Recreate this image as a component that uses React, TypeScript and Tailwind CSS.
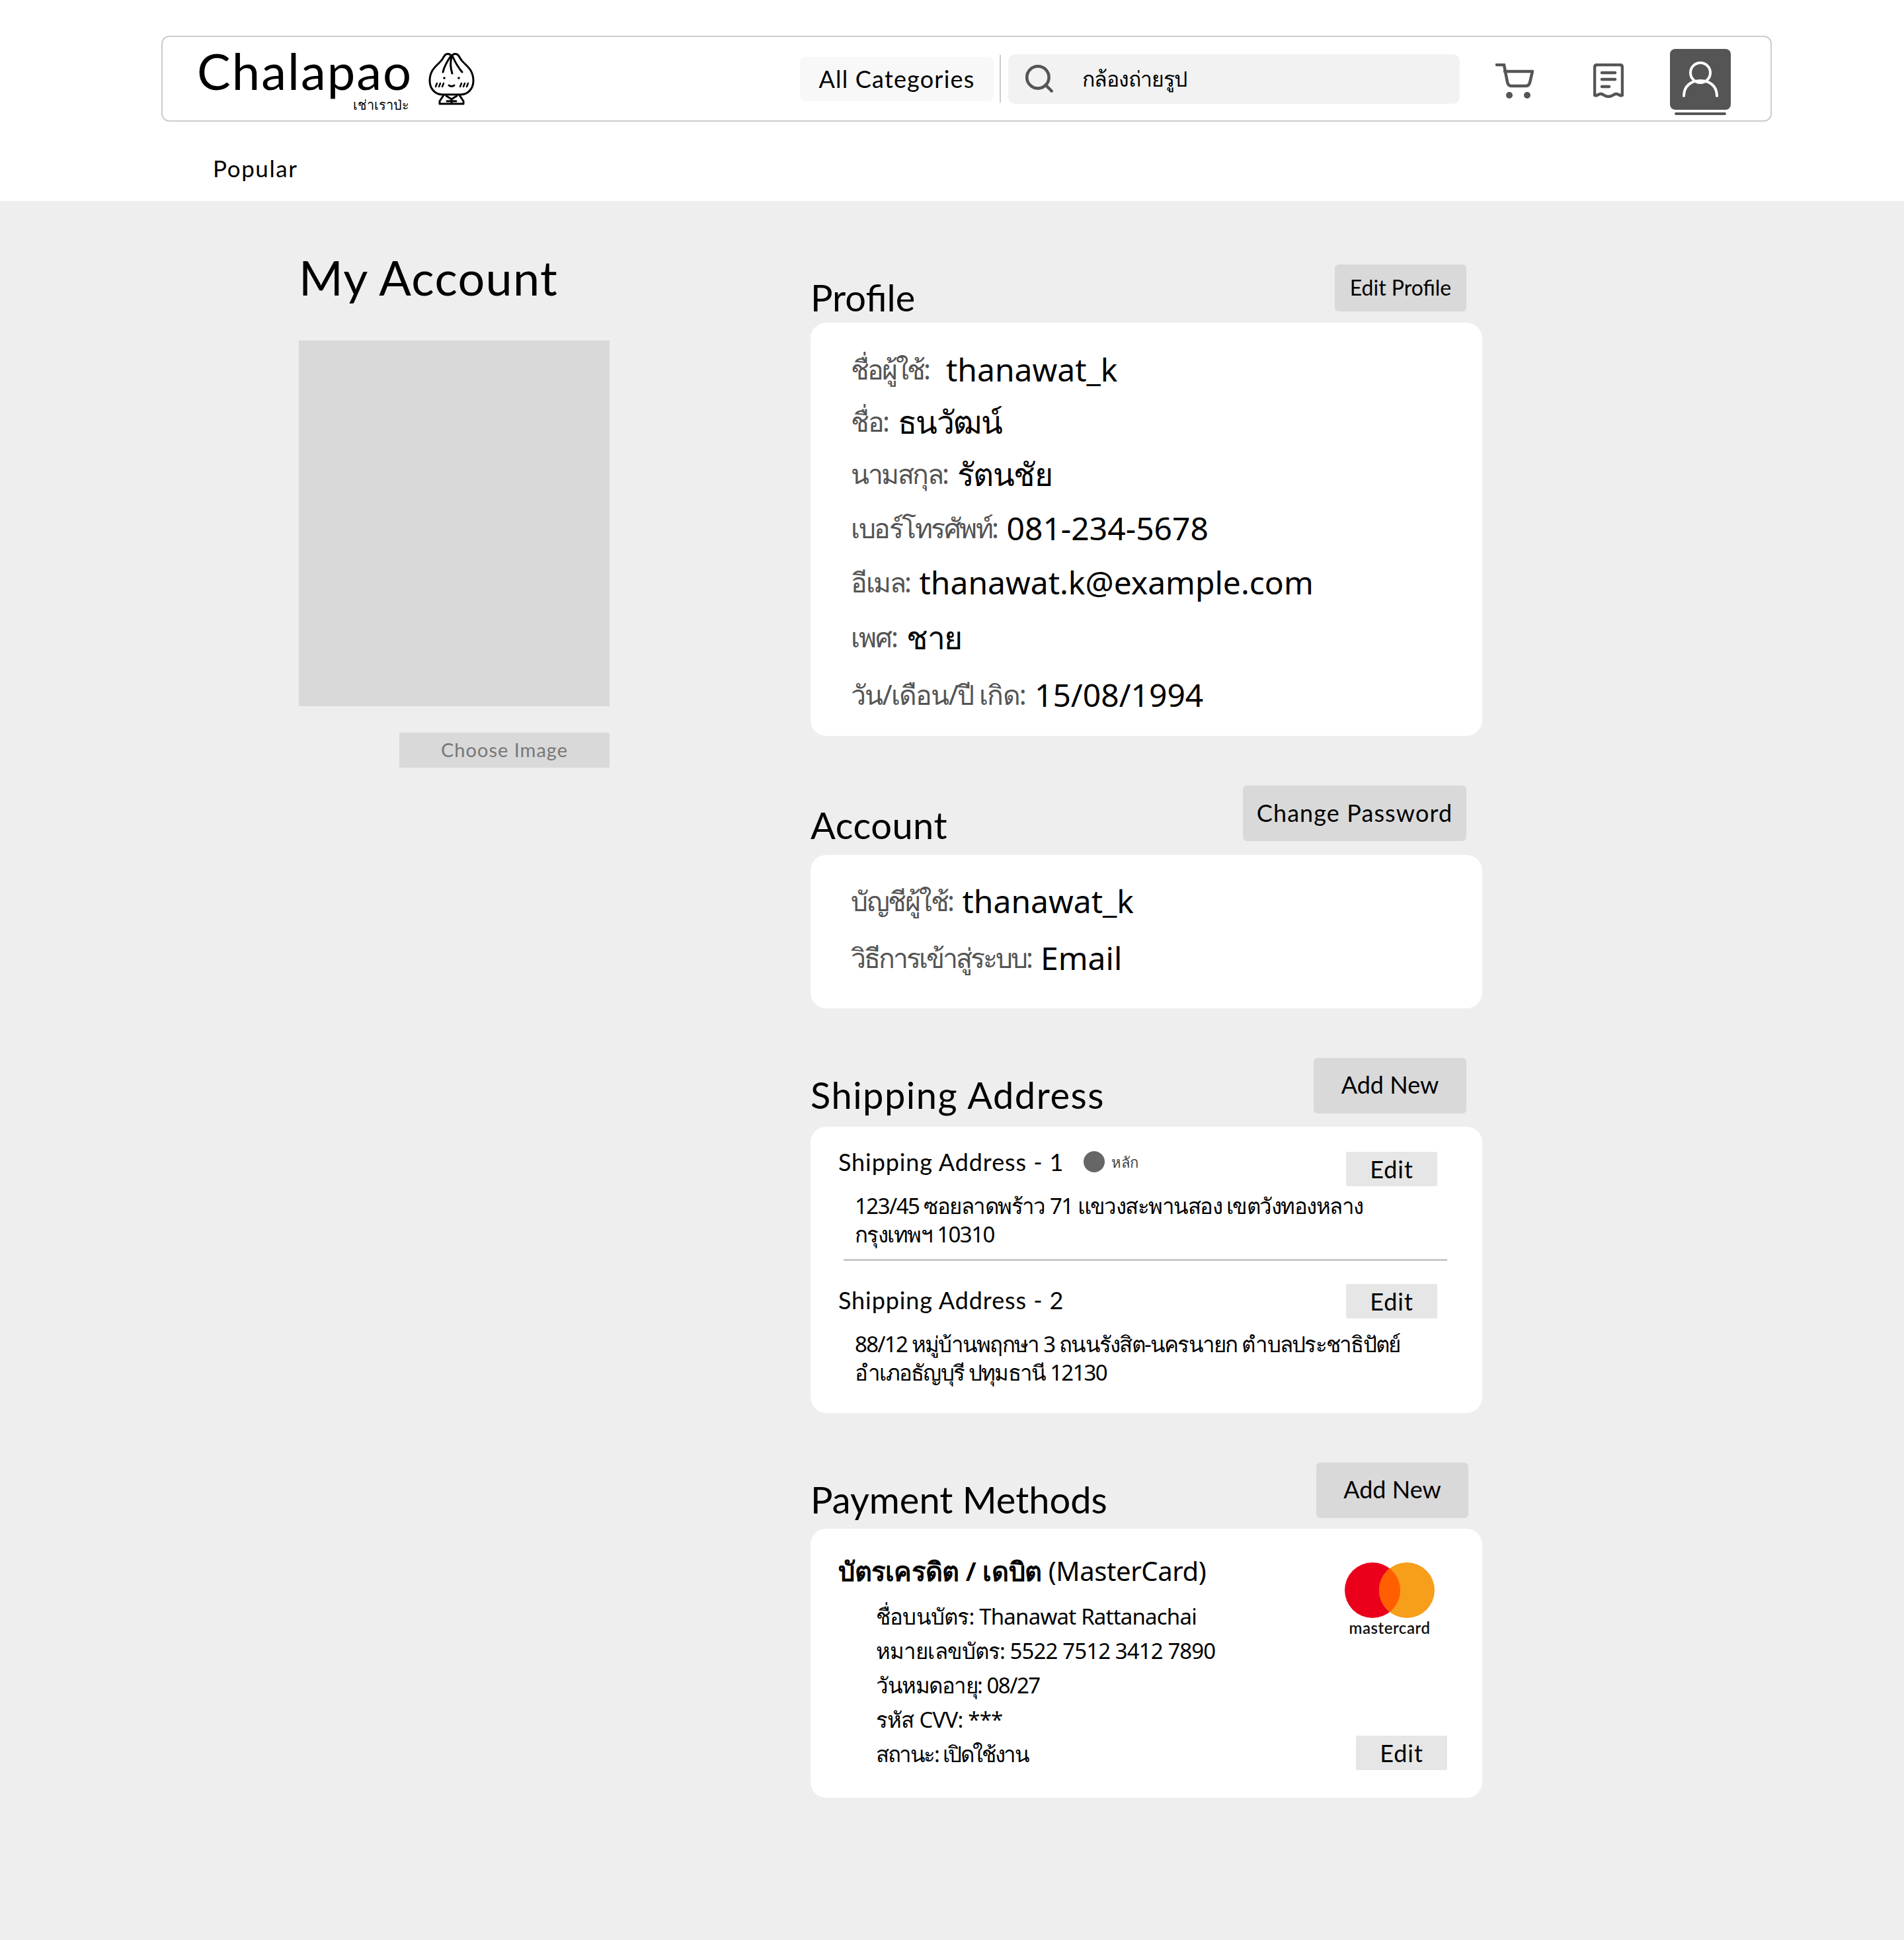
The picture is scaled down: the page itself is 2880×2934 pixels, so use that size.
import { Search } from "lucide-react";

const profileRows = [
  { label: "ชื่อผู้ใช้:", value: "thanawat_k", cls: "mt-0", labelCls: "tracking-[-3px]", gap: "ml-[26px]" },
  { label: "ชื่อ:", value: "ธนวัฒน์", cls: "mt-[9px]", labelCls: "tracking-[-2.5px]", gap: "ml-[14px] tracking-[-1.5px]" },
  { label: "นามสกุล:", value: "รัตนชัย", cls: "mt-[9px]", labelCls: "tracking-[-2.5px]", gap: "ml-[14px] tracking-[-1.5px]" },
  { label: "เบอร์โทรศัพท์:", value: "081-234-5678", cls: "mt-[12px]", labelCls: "tracking-[-2.5px]", gap: "ml-[14px]" },
  { label: "อีเมล:", value: "thanawat.k@example.com", cls: "mt-[12px]", labelCls: "tracking-[-2.5px]", gap: "ml-[14px]" },
  { label: "เพศ:", value: "ชาย", cls: "mt-[13px]", labelCls: "tracking-[-2px]", gap: "ml-[14px] tracking-[-1.5px]" },
  { label: "วัน/เดือน/ปี เกิด:", value: "15/08/1994", cls: "mt-[17px]", labelCls: "tracking-[-1.8px]", gap: "ml-[14px]" },
];

const accountRows = [
  { label: "บัญชีผู้ใช้:", value: "thanawat_k", cls: "mt-0", labelCls: "tracking-[-2.5px]" },
  { label: "วิธีการเข้าสู่ระบบ:", value: "Email", cls: "mt-[16px]", labelCls: "tracking-[-3px]" },
];

const cardRows = [
  { text: "ชื่อบนบัตร: Thanawat Rattanachai", cls: "tracking-[-0.8px]" },
  { text: "หมายเลขบัตร: 5522 7512 3412 7890", cls: "tracking-[-0.9px]" },
  { text: "วันหมดอายุ: 08/27", cls: "tracking-[-1.5px]" },
  { text: "รหัส CVV: ***", cls: "tracking-[-0.8px]" },
  { text: "สถานะ: เปิดใช้งาน", cls: "tracking-[-2.4px]" },
];

function BaoLogo() {
  return (
    <svg viewBox="0 0 70 80" className="h-[80px] w-[70px]" fill="none" stroke="#000" strokeWidth="3" strokeLinecap="round" strokeLinejoin="round">
      <path d="M27 3c3-1 6 0 8 3 2-3 5-4 8-3 3 1 4 5 7 9 5 7 18 13 18 31 0 13-9 21-19 21H21C11 64 2 56 2 43c0-18 13-24 18-31 3-4 4-8 7-9z" />
      <path d="M33 7c-4 6-9 14-11 23M35 7c-2 8-2 16 1 25M37 7c3 7 9 17 14 23" />
      <path d="M13 47l-2 5M18 47l-2 5M23 47l-2 5M50 47l-2 5M55 47l-2 5M60 47l-2 5" strokeWidth="2.500" />
      <path d="M31 50c2 2 6 2 8 0" />
      <circle cx="24" cy="39" r="1.800" fill="#000" stroke="none" />
      <circle cx="46" cy="39" r="1.800" fill="#000" stroke="none" />
      <path d="M23 65l-6 9v4h36v-4l-6-9M27 66l8 5 8-5M35 71v7M28 74h14" />
    </svg>
  );
}

function CartIcon() {
  return (
    <svg viewBox="0 0 58 54" className="h-[54px] w-[58px]" fill="none" stroke="#555" strokeWidth="4.500" strokeLinecap="round" strokeLinejoin="round">
      <path d="M2 2h11l5 26c.600 3 2.500 6 6 6h22c3 0 5-2 6-5l4-17H14" />
      <circle cx="21" cy="48" r="5" fill="#555" stroke="none" />
      <circle cx="48" cy="48" r="5" fill="#555" stroke="none" />
    </svg>
  );
}

function ReceiptIcon() {
  return (
    <svg viewBox="0 0 46 52" className="h-[52px] w-[46px]" fill="none" stroke="#555" strokeWidth="4.500" strokeLinecap="round" strokeLinejoin="round">
      <path d="M2 6c0-2.500 1.500-4 4-4h34c2.500 0 4 1.500 4 4v42c-4 2-6-3-10-2s-6 4-11 4-7-3-11-4-6 4-10 2z" />
      <path d="M13 14h20M13 24h20M13 35h11" />
    </svg>
  );
}

function UserIcon() {
  return (
    <svg viewBox="0 0 54 54" className="h-[54px] w-[54px]" fill="none" stroke="#fff" strokeWidth="4" strokeLinecap="round">
      <circle cx="27" cy="17" r="15" />
      <path d="M2 52c0-15 11-23 25-23s25 8 25 23" />
    </svg>
  );
}

function MastercardLogo() {
  return (
    <div className="flex w-[136px] flex-col items-center">
      <svg viewBox="0 0 136 84" className="h-[84px] w-[136px]">
        <circle cx="42" cy="42" r="42" fill="#eb001b" />
        <circle cx="94" cy="42" r="42" fill="#f79e1b" />
        <path d="M68 9a42 42 0 0 1 0 66 42 42 0 0 1 0-66z" fill="#ff5f00" />
      </svg>
      <span className="mt-[2px] text-[24px] leading-[26px] font-semibold tracking-[0.5px] text-[#111] [font-family:Lato,sans-serif]">mastercard</span>
    </div>
  );
}

function SectionHeader({ title, button, btnCls, titleCls }: { title: string; button: string; btnCls: string; titleCls: string }) {
  return (
    <div className="flex items-start justify-between">
      <h2 className={`text-[56px] leading-[60px] font-normal text-black ${titleCls}`}>{title}</h2>
      <button className={`flex items-center justify-center rounded-[6px] bg-[#d9d9d9] text-black ${btnCls}`}>{button}</button>
    </div>
  );
}

function EditButton({ cls }: { cls: string }) {
  return (
    <button className={`flex h-[52px] w-[138px] shrink-0 items-center justify-center rounded-[2px] bg-[#e6e6e6] text-[36px] tracking-[1px] text-black ${cls}`}>Edit</button>
  );
}

export default function App() {
  return (
    <div className="flex min-h-[2934px] flex-col bg-[#eeeeee] [font-family:Lato,'Noto_Sans',sans-serif]">
      <header className="h-[304px] bg-white pt-[54px] pr-[200px] pl-[244px]">
        <nav className="flex h-[130px] items-center rounded-[12px] border-2 border-[#cccccc] pl-[52px]">
          <div className="flex items-center">
            <div className="flex w-[336px] flex-col pt-[6px]">
              <span className="text-[76px] leading-[70px] tracking-[2px] text-black">Chalapao</span>
              <span className="mt-[4px] ml-[236px] text-[20px] leading-[26px] text-black [font-family:'Noto_Sans',sans-serif]">เช่าเราป่ะ</span>
            </div>
            <div className="ml-[14px]">
              <BaoLogo />
            </div>
          </div>
          <div className="ml-[492px] flex h-[67px] w-[293px] items-center justify-center rounded-[8px] bg-[#f8f8f8] text-[36px] tracking-[1.2px] text-black">All Categories</div>
          <div className="mr-[11px] ml-[9px] h-[72px] w-[2px] bg-[#cccccc]" />
          <div className="flex h-[75px] w-[683px] items-center rounded-[10px] bg-[#f2f2f2] pl-[22px]">
            <Search className="h-[50px] w-[50px] text-[#555555]" strokeWidth={2.200} />
            <span className="ml-[40px] text-[32px] font-medium tracking-[-1px] text-black [font-family:'Noto_Sans',sans-serif]">กล้องถ่ายรูป</span>
          </div>
          <div className="mt-[8px] ml-[54px]">
            <CartIcon />
          </div>
          <div className="mt-[6px] ml-[90px]">
            <ReceiptIcon />
          </div>
          <div className="ml-[70px] flex flex-col items-center pt-[10px]">
            <div className="flex h-[92px] w-[92px] items-center justify-center rounded-[8px] bg-[#555555]">
              <UserIcon />
            </div>
            <div className="mt-[4px] h-[4px] w-[78px] rounded-full bg-[#555555]" />
          </div>
        </nav>
        <div className="mt-[48px] pl-[78px] text-[35px] leading-[44px] tracking-[1.6px] text-black">Popular</div>
      </header>

      <main className="flex pl-[452px]">
        <aside className="flex w-[470px] flex-col pt-[71px]">
          <h1 className="text-[72px] leading-[88px] font-normal tracking-[1.3px] text-black">My Account</h1>
          <div className="mt-[52px] h-[553px] w-[470px] bg-[#d9d9d9]" />
          <button className="mt-[40px] ml-[152px] h-[53px] w-[318px] rounded-[2px] bg-[#d9d9d9] pb-[2px] text-[29px] tracking-[1px] text-[#777777]">Choose Image</button>
        </aside>

        <div className="ml-[304px] flex w-[1016px] flex-col pt-[96px]">
          <section>
            <div className="h-[88px]">
              <SectionHeader title="Profile" button="Edit Profile" titleCls="mt-[20px]" btnCls="mr-[24px] h-[71px] w-[199px] pb-[1px] text-[32px]" />
            </div>
            <div className="h-[625px] rounded-[24px] bg-white pt-[36px] pl-[61px]">
              {profileRows.map((row) => (
                <div key={row.label} className={`flex h-[70px] items-center ${row.cls}`}>
                  <span className={`text-[41px] text-[#555555] [font-family:'Noto_Sans',sans-serif] ${row.labelCls}`}>{row.label}</span>
                  <span className={`text-[48px] text-black [font-family:'Noto_Sans',sans-serif] ${row.gap}`}>{row.value}</span>
                </div>
              ))}
            </div>
          </section>

          <section className="mt-[75px]">
            <div className="h-[105px]">
              <SectionHeader title="Account" button="Change Password" titleCls="mt-[30px] tracking-[0.5px]" btnCls="mr-[24px] h-[84px] w-[338px] pb-[3px] text-[36px] tracking-[1.1px]" />
            </div>
            <div className="h-[232px] rounded-[24px] bg-white pt-[35px] pl-[61px]">
              {accountRows.map((row) => (
                <div key={row.label} className={`flex h-[70px] items-center ${row.cls}`}>
                  <span className={`text-[41px] text-[#555555] [font-family:'Noto_Sans',sans-serif] ${row.labelCls}`}>{row.label}</span>
                  <span className="ml-[14px] text-[48px] text-black [font-family:'Noto_Sans',sans-serif]">{row.value}</span>
                </div>
              ))}
            </div>
          </section>

          <section className="mt-[75px]">
            <div className="h-[104px]">
              <SectionHeader title="Shipping Address" button="Add New" titleCls="mt-[26px] tracking-[1.5px]" btnCls="mr-[24px] h-[84px] w-[231px] pb-[5px] text-[36px]" />
            </div>
            <div className="h-[433px] rounded-[24px] bg-white pt-[38px] pr-[53px] pl-[42px]">
              <div className="flex items-start justify-between pr-[15px]">
                <div className="flex h-[30px] items-center">
                  <span className="text-[36px] tracking-[0.9px] text-black">Shipping Address - 1</span>
                  <span className="ml-[30px] h-[32px] w-[32px] rounded-full bg-[#666666]" />
                  <span className="ml-[10px] text-[22px] font-medium text-[#444444] [font-family:'Noto_Sans',sans-serif]">หลัก</span>
                </div>
                <EditButton cls="" />
              </div>
              <p className="mt-[8px] pl-[25px] text-[33px] leading-[43px] tracking-[-1.55px] whitespace-nowrap text-black [font-family:'Noto_Sans',sans-serif]">
                123/45 ซอยลาดพร้าว 71 แขวงสะพานสอง เขตวังทองหลาง
                <br />
                กรุงเทพฯ 10310
              </p>
              <div className="mt-[16px] ml-[8px] h-[3px] bg-[#c8c8c8]" />
              <div className="mt-[35px] flex items-start justify-between pr-[15px]">
                <span className="-mt-[3px] text-[36px] tracking-[0.9px] text-black">Shipping Address - 2</span>
                <EditButton cls="" />
              </div>
              <p className="mt-[17px] pl-[25px] text-[33px] leading-[43px] tracking-[-1.75px] whitespace-nowrap text-black [font-family:'Noto_Sans',sans-serif]">
                88/12 หมู่บ้านพฤกษา 3 ถนนรังสิต-นครนายก ตำบลประชาธิปัตย์
                <br />
                อำเภอธัญบุรี ปทุมธานี 12130
              </p>
            </div>
          </section>

          <section className="mt-[75px]">
            <div className="h-[100px]">
              <SectionHeader title="Payment Methods" button="Add New" titleCls="mt-[26px]" btnCls="mr-[21px] h-[84px] w-[230px] pb-[5px] text-[36px]" />
            </div>
            <div className="flex h-[407px] justify-between rounded-[24px] bg-white pt-[38px] pr-[53px] pl-[42px]">
              <div>
                <div className="text-[40px] leading-[52px] tracking-[-0.4px] text-black [font-family:'Noto_Sans',sans-serif]">
                  <span className="font-semibold">บัตรเครดิต / เดบิต</span> (MasterCard)
                </div>
                <div className="mt-[17px] pl-[57px] text-[33px] leading-[52px] text-black [font-family:'Noto_Sans',sans-serif]">
                  {cardRows.map((row) => (
                    <div key={row.text} className={row.cls}>{row.text}</div>
                  ))}
                </div>
              </div>
              <div className="flex flex-col items-end">
                <div className="mt-[13px] mr-[19px]">
                  <MastercardLogo />
                </div>
                <EditButton cls="mt-[150px]" />
              </div>
            </div>
          </section>
        </div>
      </main>
    </div>
  );
}
